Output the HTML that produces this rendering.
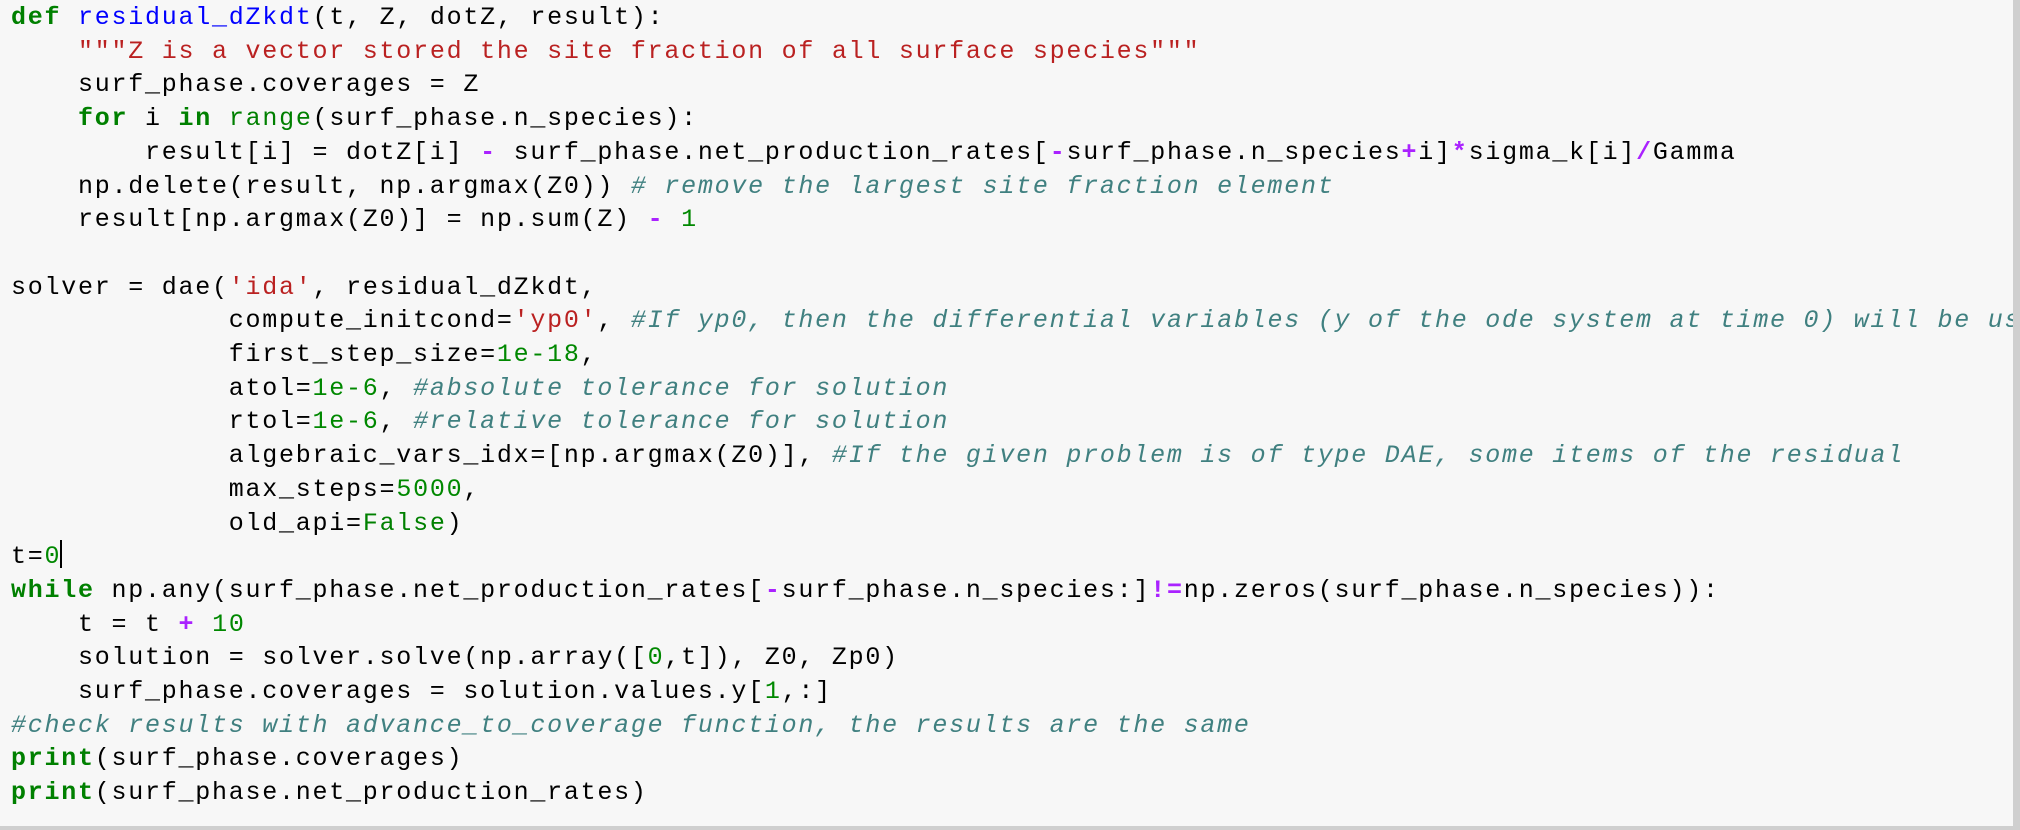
<!DOCTYPE html>
<html><head><meta charset="utf-8"><style>
html,body{margin:0;padding:0;background:#f7f7f7;width:2020px;height:830px;overflow:hidden}
.box{position:absolute;left:0;top:0;width:2013px;height:826px;overflow:hidden;background:#f7f7f7}
.rb{position:absolute;left:2013px;top:0;width:7px;height:830px;background:#cfcfcf}
.bb{position:absolute;left:0;top:826px;width:2020px;height:4px;background:#cfcfcf}
pre{margin:0;position:absolute;left:11px;top:1px;font-family:"Liberation Mono",monospace;font-size:25px;letter-spacing:1.75px;line-height:33.7px;color:#000;white-space:pre}
.k{color:#008000;font-weight:bold}
.f{color:#0000ff}
.s{color:#ba2121}
.c{color:#408080;font-style:italic}
.n{color:#080}
.o{color:#aa22ff;font-weight:bold}
.b{color:#008000}
.cur{display:inline-block;width:2px;height:28px;background:#000;vertical-align:-5px;margin-left:-1px}
</style></head><body>
<div class="box"><pre><span class="k">def</span> <span class="f">residual_dZkdt</span>(t, Z, dotZ, result):
    <span class="s">"""Z is a vector stored the site fraction of all surface species"""</span>
    surf_phase.coverages = Z
    <span class="k">for</span> i <span class="k">in</span> <span class="b">range</span>(surf_phase.n_species):
        result[i] = dotZ[i] <span class="o">-</span> surf_phase.net_production_rates[<span class="o">-</span>surf_phase.n_species<span class="o">+</span>i]<span class="o">*</span>sigma_k[i]<span class="o">/</span>Gamma
    np.delete(result, np.argmax(Z0)) <span class="c"># remove the largest site fraction element</span>
    result[np.argmax(Z0)] = np.sum(Z) <span class="o">-</span> <span class="n">1</span>

solver = dae(<span class="s">'ida'</span>, residual_dZkdt,
             compute_initcond=<span class="s">'yp0'</span>, <span class="c">#If yp0, then the differential variables (y of the ode system at time 0) will be used</span>
             first_step_size=<span class="n">1e-18</span>,
             atol=<span class="n">1e-6</span>, <span class="c">#absolute tolerance for solution</span>
             rtol=<span class="n">1e-6</span>, <span class="c">#relative tolerance for solution</span>
             algebraic_vars_idx=[np.argmax(Z0)], <span class="c">#If the given problem is of type DAE, some items of the residual</span>
             max_steps=<span class="n">5000</span>,
             old_api=<span class="b">False</span>)
t=<span class="n">0</span><span class="cur"></span>
<span class="k">while</span> np.any(surf_phase.net_production_rates[<span class="o">-</span>surf_phase.n_species:]<span class="o">!=</span>np.zeros(surf_phase.n_species)):
    t = t <span class="o">+</span> <span class="n">10</span>
    solution = solver.solve(np.array([<span class="n">0</span>,t]), Z0, Zp0)
    surf_phase.coverages = solution.values.y[<span class="n">1</span>,:]
<span class="c">#check results with advance_to_coverage function, the results are the same</span>
<span class="k">print</span>(surf_phase.coverages)
<span class="k">print</span>(surf_phase.net_production_rates)</pre></div>
<div class="rb"></div><div class="bb"></div>
</body></html>
